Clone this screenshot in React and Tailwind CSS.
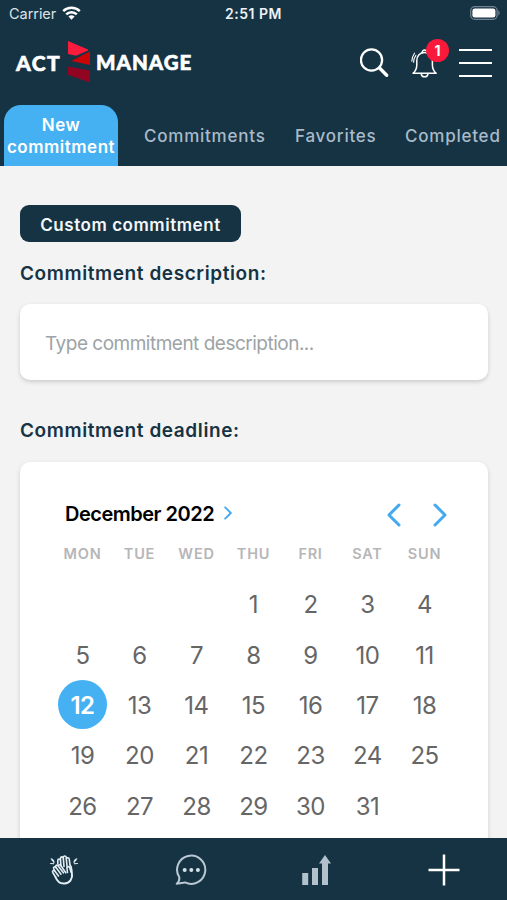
import { useState } from 'react'

const weekdays = ['MON', 'TUE', 'WED', 'THU', 'FRI', 'SAT', 'SUN']
const tabs = [
  { title: 'Commitments', width: 'w-[122px]', gap: 'ml-[26px]' },
  { title: 'Favorites', width: 'w-[82px]', gap: 'ml-[29px]' },
  { title: 'Completed', width: 'w-[96px]', gap: 'ml-[28px]' },
]

function StatusBar() {
  return (
    <div className="relative flex h-7 items-center justify-between pl-[9px] pr-[6px]">
      <div className="flex items-center gap-[6px]">
        <span className="text-[14.5px] tracking-[-0.05px] text-[#dce3e8]">Carrier</span>
        <svg className="-mt-[2px]" width="19" height="14" viewBox="0 0 19 14" fill="none" stroke="#fff" strokeWidth="2.5">
          <path d="M1.2 5.1a12 12 0 0 1 16.6 0" />
          <path d="M4.2 8.3a7.6 7.6 0 0 1 10.6 0" />
          <path d="M9.5 13.8 6.4 10.6a4.5 4.5 0 0 1 6.2 0z" fill="#fff" stroke="none" />
        </svg>
      </div>
      <span className="absolute left-[225px] top-[3px] text-[14px] font-semibold tracking-[0.5px] text-[#eef2f4]">2:51 PM</span>
      <svg className="-mt-[2px]" width="31" height="14" viewBox="0 0 31 14">
        <rect x="0.7" y="0.7" width="26.4" height="12.6" rx="4" fill="none" stroke="#71838e" strokeWidth="1.3" />
        <rect x="2.4" y="2.4" width="23" height="9.2" rx="2.4" fill="#fff" />
        <path d="M28.3 4.6c1.8.6 1.8 4.2 0 4.8z" fill="#71838e" />
      </svg>
    </div>
  )
}

function Logo() {
  return (
    <div className="flex items-center font-['Lato',sans-serif] text-[21px] font-black leading-none text-white">
      <span className="w-[52px] tracking-[1.5px] [-webkit-text-stroke:0.6px_#fff]">ACT</span>
      <svg className="-mt-[2px]" width="22" height="42" viewBox="0 0 22 42">
        <path d="M0 0 20 8.4v1L8 14.700 0 13z" fill="#fb1c3d" />
        <path d="M22 10.200v13.700L3.500 20z" fill="#cb0505" />
        <path d="M0 25.500 22 29.500v12L0 33.700z" fill="#920522" />
      </svg>
      <span className="ml-[6px] text-[20.5px] tracking-[1px] [-webkit-text-stroke:0.6px_#fff]">MANAGE</span>
    </div>
  )
}

function Header() {
  return (
    <header className="h-[166px] shrink-0 bg-[#163344]">
      <StatusBar />
      <div className="flex h-[69px] items-center justify-between pl-[16px] pr-[15px]">
        <Logo />
        <div className="flex items-center">
          <svg width="30" height="30" viewBox="0 0 30 30" fill="none" stroke="#fff">
            <circle cx="11.500" cy="12" r="10.600" strokeWidth="2.300" />
            <path d="m19.500 20 7.200 7.200" strokeWidth="3.400" strokeLinecap="round" />
          </svg>
          <div className="relative ml-[21px] h-[30px] w-[28px]">
            <svg width="28" height="30" viewBox="0 0 28 30" fill="none" stroke="#fff" strokeWidth="1.5" strokeLinecap="round" strokeLinejoin="round">
              <path d="M2 25.300c2.400-2.200 3.800-4.600 3.800-8.400v-4.200C5.800 7.700 9 4.600 13.600 4.600S21.400 7.700 21.400 12.700v4.200c0 3.800 1.400 6.200 3.800 8.400z" />
              <path d="M11.300 4.700c-.6-3.600 5.200-3.600 4.600 0M10.200 25.600c.5 4.300 6.300 4.300 6.800 0" />
              <path d="M.8 13.200c0-3.500.9-5.300 2.700-8M2.600 14.300c0-2.800.8-4.800 2.300-7" strokeWidth="1.100" />
            </svg>
            <span className="absolute -top-[9px] left-[15px] flex h-[23px] w-[23px] items-center justify-center rounded-full bg-[#f9193b] text-[14px] font-bold text-white">1</span>
          </div>
          <div className="ml-[20px] flex flex-col gap-[11px]">
            <div className="h-[2px] w-[33px] bg-white" />
            <div className="h-[2px] w-[33px] bg-white" />
            <div className="h-[2px] w-[33px] bg-white" />
          </div>
        </div>
      </div>
      <nav className="flex h-[69px] items-end pl-1 text-[17px] font-medium">
        <button className="h-[61px] w-[114px] rounded-t-[17px] bg-[#45b0f2] pt-[1px] text-center font-semibold leading-[22px] tracking-[0.5px] text-white">
          New commitment
        </button>
        {tabs.map((tab) => (
          <button key={tab.title} className={`${tab.width} ${tab.gap} h-[61px] whitespace-nowrap pt-[2px] text-left tracking-[0.77px] text-[#a9bac8]`}>
            {tab.title}
          </button>
        ))}
      </nav>
    </header>
  )
}

function Chevron({ className, d, width, height, stroke }) {
  return (
    <svg className={className} width={width} height={height} viewBox="0 0 14 24" fill="none" stroke="#43aaf0" strokeWidth={stroke} strokeLinecap="round" strokeLinejoin="round">
      <path d={d} />
    </svg>
  )
}

function Calendar({ selected, onSelect }) {
  const days = [null, null, null, ...Array.from({ length: 31 }, (_, i) => i + 1)]

  return (
    <div className="mt-[17px] h-[420px] w-[468px] rounded-[10px] bg-white pl-[34px] pr-[35px] pt-[38px] shadow-[0_2px_5px_rgba(0,0,0,0.14)]">
      <div className="flex h-[30px] items-center pl-[11px] pr-[6px]">
        <span className="-mt-[3px] text-[20px] font-semibold tracking-[-0.5px] text-black">December 2022</span>
        <Chevron className="-mt-[4px] ml-[10px]" width={8} height={14} stroke={3.2} d="M2 2l10 10L2 22" />
        <Chevron className="ml-auto" width={14} height={24} stroke={3} d="M12 2 2 12l10 10" />
        <Chevron className="ml-[32px]" width={14} height={24} stroke={3} d="M2 2l10 10L2 22" />
      </div>
      <div className="mt-[14px] grid grid-cols-7 text-center text-[14.5px] font-semibold leading-5 tracking-[0.75px] text-[#b6b6b8]">
        {weekdays.map((day) => (
          <span key={day}>{day}</span>
        ))}
      </div>
      <div className="mt-[15px] grid auto-rows-[50.4px] grid-cols-7 place-items-center text-[24px] tracking-[-0.5px] text-[#666]">
        {days.map((day, i) => (
          <button
            key={i}
            onClick={() => day && onSelect(day)}
            className={`flex h-[49px] w-[49px] items-center justify-center rounded-full pt-[2px] ${day === selected ? 'bg-[#45b0f2] font-semibold text-white' : ''}`}>
            {day}
          </button>
        ))}
      </div>
    </div>
  )
}

function Footer() {
  return (
    <footer className="flex h-[62px] shrink-0 items-center bg-[#163344] pl-[49px] pt-[2px]">
      {/* Applause */}
      <svg width="30" height="32" viewBox="0 0 30 32" fill="none" stroke="#e3edf2" strokeWidth="1.6" strokeLinecap="round" strokeLinejoin="round">
        <path d="M8.800 9.500V6.500c0-2 2.600-2 2.700-.2V4.200c.2-1.700 2.500-1.700 2.800-.2V3c.5-1.500 2.800-1.300 3 .4v1.200c.6-1.500 2.900-1 3 .8l.7 5.600" />
        <path d="m11.500 6.300.5 5.700M14.300 4l.7 8.500M17.300 4.600l.9 8.900" />
        <path d="M21 11c1.200 1 1.600 3.300 1.500 5.500M18.500 18.500l-.5-4c-.2-2.200 2.300-2.500 2.800-.5l1.200 4" />
        <path d="m6.500 23-2.700-4.500c-1-1.800 1-2.800 2-1.500l-1-2c-1-1.900 1.200-2.900 2.200-1.400l-.2-.6c-.7-1.800 1.500-2.500 2.400-1.100.3-1.500 1.900-1.600 2.600-.4l5 7.300" />
        <path d="m5.800 17 3.700 5M7 13.600l5 6.600M9.200 11.900l5.200 6.900" />
        <path d="M6.500 23c1.600 4.300 4.900 6.800 9 6.500 5.300-.4 8.300-5 7.500-9.500l-.6-4" strokeWidth="2" />
        <path d="M1.600 9.500l3 .2M3 6l2 2M25 8l2-2M25.500 9.700l3-.2M2.200 4.800c2 .8 2.800 2 2.700 4M27.800 4.800c-2 .8-2.800 2-2.700 4" strokeWidth="1.100" />
      </svg>
      {/* Messages */}
      <svg className="ml-[96px]" width="32" height="32" viewBox="0 0 32 32" fill="none" stroke="#b9c8d2" strokeWidth="2">
        <path d="M4.300 23.300A14.100 14.100 0 1 1 10 28.400l-8.300 1.300c2.300-1.700 2.800-4 2.600-6.400z" strokeLinejoin="round" />
        <g fill="#d6e2eb" stroke="none">
          <circle cx="9.700" cy="16" r="2" />
          <circle cx="16.300" cy="16" r="2" />
          <circle cx="22.900" cy="16" r="2" />
        </g>
      </svg>
      {/* Progress */}
      <svg className="ml-[94px]" width="30" height="32" viewBox="0 0 30 32" fill="#b2c1cc">
        <path d="M1.200 19h6v12h-6zM11 14h6v17h-6zM21 31V9.500h-3L24 1l6 8.500h-3V31z" />
      </svg>
      <svg className="ml-[97px]" width="32" height="32" viewBox="0 0 32 32" stroke="#fff" strokeWidth="2.500">
        <path d="M.5 16h31M16 .5v31" />
      </svg>
    </footer>
  )
}

function App() {
  const [selected, setSelected] = useState(12)

  return (
    <div className="flex h-[900px] w-full flex-col overflow-hidden bg-[#f3f3f3] font-['Inter',sans-serif]">
      <Header />
      <main className="min-h-0 flex-1 overflow-hidden px-5 pt-[39px] text-[#163344]">
        <button className="flex h-[37px] w-[221px] items-center justify-center rounded-[9px] bg-[#163344] pt-[4px] text-[17px] font-semibold tracking-[0.55px] text-[#f3f7fa]">
          Custom commitment
        </button>
        <h2 className="mt-[18px] text-[19px] font-semibold leading-7 tracking-[0.59px]">Commitment description:</h2>
        <input
          placeholder="Type commitment description..."
          className="mt-[16px] block h-[76px] w-[468px] rounded-[10px] bg-white px-[25px] pt-[2px] text-[19px] tracking-[-0.5px] shadow-[0_2px_4px_rgba(0,0,0,0.16)] outline-none placeholder:text-[#9da3a6]" />
        <h2 className="mt-[37px] text-[19px] font-semibold leading-7 tracking-[0.59px]">Commitment deadline:</h2>
        <Calendar selected={selected} onSelect={setSelected} />
      </main>
      <Footer />
    </div>
  )
}

export default App
